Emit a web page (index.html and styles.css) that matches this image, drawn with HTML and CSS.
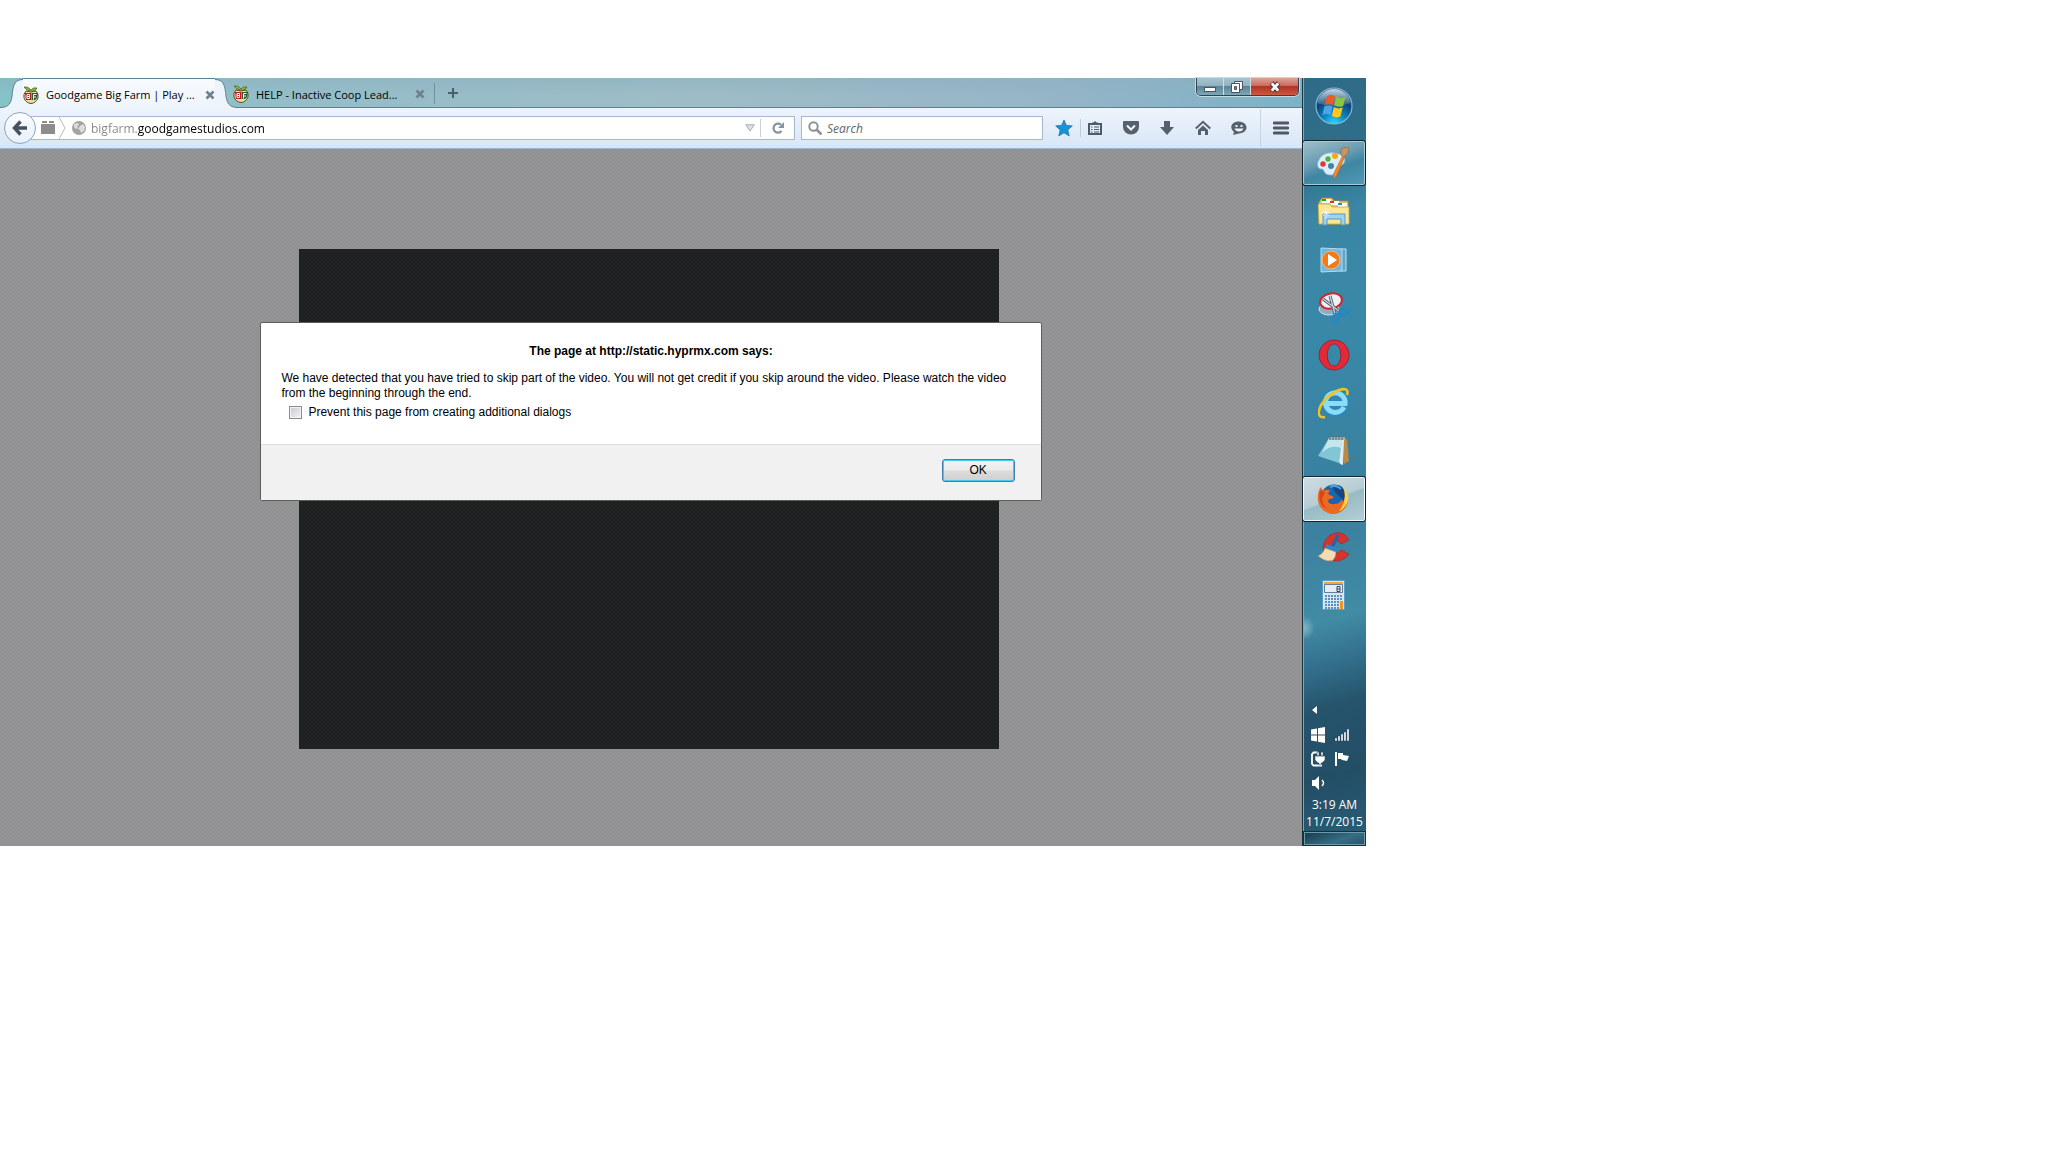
FILE: index.html
```html
<!DOCTYPE html>
<html lang="en">
<head>
	<meta charset="UTF-8">
	<title>Goodgame Big Farm | Play</title>
	<link rel="stylesheet" href="styles.css">
</head>
<body>
<svg class="defs" width="0" height="0">
	<symbol id="farm" viewBox="0 0 16 18">
		<path d="M3 5Q8 7 13 5q3 3 2 7-2 5-7 5.500Q3 17 1 12 0 8 3 5z" fill="#e9e0ae" stroke="#5d4a1c"/>
		<path d="M1 1Q5 0 8 4Q10 1 14 2Q13 5 9 5.500Q3 5 1 1Z" fill="#8fb43a" stroke="#46601c" stroke-width=".7"/>
		<path d="M2 7h6v7H3z" fill="#c4161c"/>
		<path d="M8.500 7H15l-1 5-2 2H8.500z" fill="#28582b"/>
		<path d="M4 8.500h2.500v2H4zM4 10.500h2.500v2H4zM10.500 13.500v-5h3M10.500 11H13" fill="none" stroke="#fff"/>
	</symbol>
	<symbol id="cross" viewBox="0 0 10 10">
		<path d="M1.500 1.500l7 7M8.500 1.500l-7 7" stroke="#6d818e" stroke-width="2.600"/>
	</symbol>
</svg>
<div class="desktop">
	<div class="window">
		<div class="titlebar">
			<div class="tab active">
				<svg class="curve" viewBox="0 0 22 30"><path d="M0 30V29.500C8 29 10 25 11 18C12 8 13 1.500 22 1.500V30Z" fill="#eef4fb"/><path d="M0 29.500C8 29 10 25 11 18C12 8 13 1.500 22 1.500" fill="none" stroke="#5d8291"/></svg>
				<div class="tab_body">
					<svg class="favicon"><use href="#farm"/></svg>
					<span class="tab_title">Goodgame Big Farm | Play ...</span>
					<button class="tab_close" aria-label="Close tab"><svg width="10" height="10"><use href="#cross"/></svg></button>
				</div>
				<svg class="curve" viewBox="0 0 22 30"><path d="M22 30V29.500C14 29 12 25 11 18C10 8 9 1.500 0 1.500V30Z" fill="#eef4fb"/><path d="M22 29.500C14 29 12 25 11 18C10 8 9 1.500 0 1.500" fill="none" stroke="#5d8291"/></svg>
			</div>
			<div class="tab inactive">
				<div class="tab_body">
					<svg class="favicon"><use href="#farm"/></svg>
					<span class="tab_title">HELP - Inactive Coop Lead...</span>
					<button class="tab_close" aria-label="Close tab"><svg width="10" height="10"><use href="#cross"/></svg></button>
				</div>
			</div>
			<button class="new_tab" aria-label="New tab"><svg width="10" height="10" viewBox="0 0 10 10"><path d="M5 0v10M0 5h10" stroke="#49606e" stroke-width="2"/></svg></button>
			<div class="controls">
				<button class="control" aria-label="Minimize"><svg width="14" height="14" viewBox="0 0 14 14"><rect x="1.500" y="7.500" width="11" height="4" fill="#fff" stroke="#485563"/></svg></button>
				<button class="control" aria-label="Restore"><svg width="14" height="14" viewBox="0 0 14 14"><path d="M4.500 1.500h8v8h-8z" fill="#fff" stroke="#485563"/><path d="M1.500 3.500h8v9h-8z" fill="#fff" stroke="#485563"/><path d="M4.500 6.500h2v3h-2z" fill="#7797a8" stroke="#485563"/></svg></button>
				<button class="control close" aria-label="Close"><svg width="14" height="14" viewBox="0 0 14 14"><path d="M3.500 3l7 8M10.500 3l-7 8" stroke="#5c3a40" stroke-width="5"/><path d="M3.800 3.300l6.400 7.400M10.200 3.300l-6.400 7.400" stroke="#fff" stroke-width="2.800"/></svg></button>
			</div>
		</div>

		<div class="toolbar">
			<button class="back" aria-label="Back"><svg width="16" height="16" viewBox="0 0 16 16"><path d="M8.500 1.500L2.500 8l6 6.500M3 8h12" fill="none" stroke="#47525f" stroke-width="3.400"/></svg></button>
			<div class="urlbar">
				<svg width="14" height="14" viewBox="0 0 14 14"><path d="M0 3h14v10H0zM1 0h5v2H1zM8 0h5v2H8z" fill="#8d8d8d"/></svg>
				<svg class="chevron" width="8" height="22" viewBox="0 0 8 22"><path d="M1 0l6 11-6 11" fill="none" stroke="#b9bec4"/></svg>
				<svg width="14" height="14" viewBox="0 0 14 14"><circle cx="7" cy="7" r="7" fill="#a3a3a3"/><path d="M2 3l4-1 1 2-2 1 1 2-2 1-2-2zM8 5l3-2 2 3-1 4-3 2-1-3-2-1z" fill="#dedede"/></svg>
				<input class="url" type="text" aria-label="Address" value="bigfarm.goodgamestudios.com">
				<button class="drop" aria-label="Show history"><svg width="10" height="8" viewBox="0 0 10 8"><path d="M.7.8h8.600L5 7z" fill="#dbe3ea" stroke="#a2adb7"/></svg></button>
				<button class="reload" aria-label="Reload"><svg width="12" height="12" viewBox="0 0 12 12"><path d="M9.500 9A4.500 4.500 0 1 1 9 2.800" fill="none" stroke="#8594a2" stroke-width="2.200"/><path d="M12 0v6H6z" fill="#8594a2"/></svg></button>
			</div>
			<div class="search">
				<svg width="14" height="14" viewBox="0 0 14 14"><circle cx="5.500" cy="5.500" r="4.200" fill="none" stroke="#8d9194" stroke-width="2"/><path d="M8.500 8.500l5 5" stroke="#8d9194" stroke-width="2.600"/></svg>
				<input type="text" aria-label="Search" placeholder="Search">
			</div>
			<div class="tools">
				<button class="tool star" aria-label="Bookmark"><svg width="18" height="18" viewBox="0 0 18 18"><path d="M9 1l2.300 5.300 6 .6-4.500 4 1.400 6L9 13.700l-5.200 3.200 1.400-6-4.500-4 6-.6z" fill="#1a93d4" stroke="#1a76ac" stroke-width=".8"/></svg></button>
				<button class="tool list" aria-label="Bookmarks list"><svg width="16" height="16" viewBox="0 0 16 16"><path d="M2 4h12v10H2z" fill="none" stroke="#4e5a68" stroke-width="2"/><path d="M5 4V2.500h1.500L8 1l1.500 1.500H11V4z" fill="#4e5a68"/><path d="M4 7h1.500M7 7h5M4 9.500h1.500M7 9.500h5M4 12h1.500M7 12h5" fill="none" stroke="#4e5a68" stroke-width="1.200"/></svg></button>
				<button class="tool" aria-label="Pocket"><svg width="16" height="16" viewBox="0 0 16 16"><path d="M1 1h14q1 0 1 1v5a8 7.500 0 0 1-16 0V2q0-1 1-1z" fill="#56616f"/><path d="M4 5.500l4 4 4-4" fill="none" stroke="#f2f6fb" stroke-width="2"/></svg></button>
				<button class="tool" aria-label="Downloads"><svg width="16" height="16" viewBox="0 0 16 16"><path d="M5 1h6v6h4l-7 8-7-8h4z" fill="#56616f"/></svg></button>
				<button class="tool" aria-label="Home"><svg width="16" height="16" viewBox="0 0 16 16"><path d="M.8 8.500L8 1.800l7.200 6.700" fill="none" stroke="#56616f" stroke-width="2"/><path d="M3 10l5-4.500 5 4.500v5h-3v-4H6v4H3z" fill="#56616f"/></svg></button>
				<button class="tool" aria-label="Chat"><svg width="16" height="16" viewBox="0 0 16 16"><path d="M8 1.500C18 2 18 13 8 13.500L2 15l1-3C-2 8 0 1.500 8 1.500z" fill="#56616f"/><path d="M3.500 8.500h9q-1 3-4.500 3t-4.500-3zM4.500 5h2v2h-2zM9.500 5h2v2h-2z" fill="#edf3fa"/></svg></button>
				<button class="tool menu" aria-label="Menu"><svg width="16" height="14" viewBox="0 0 16 14"><path d="M1 2h14M1 7h14M1 12h14" stroke="#4e5966" stroke-width="2.800" stroke-linecap="round"/></svg></button>
			</div>
		</div>

		<div class="page">
			<div class="video"></div>
			<div class="dialog" role="dialog" aria-labelledby="dialog_title">
				<div class="dialog_body">
					<h1 id="dialog_title">The page at http://static.hyprmx.com says:</h1>
					<p>We have detected that you have tried to skip part of the video. You will not get credit if you skip around the video. Please watch the video from the beginning through the end.</p>
					<div class="prevent">
						<input type="checkbox" id="prevent">
						<label for="prevent">Prevent this page from creating additional dialogs</label>
					</div>
				</div>
				<div class="dialog_foot"><button class="ok">OK</button></div>
			</div>
		</div>
	</div>

	<div class="taskbar">
		<button class="start" aria-label="Start">
			<svg width="40" height="40" viewBox="0 0 40 40">
				<defs>
					<radialGradient id="orb" cx=".5" cy="1" r=".95"><stop offset="0" stop-color="#29e0ff"/><stop offset=".35" stop-color="#0a86c4"/><stop offset=".7" stop-color="#0d4478"/><stop offset="1" stop-color="#486f92"/></radialGradient>
					<linearGradient id="shine" x2="0" y2="1"><stop offset="0" stop-color="#e6f0f7" stop-opacity=".8"/><stop offset="1" stop-color="#9fc1da" stop-opacity=".2"/></linearGradient>
				</defs>
				<circle cx="20" cy="20" r="18" fill="url(#orb)" stroke="#7fb6cf" stroke-width="1.200"/>
				<path d="M3.500 17a16.700 16.700 0 0 1 33 0Q20 23 3.500 17z" fill="url(#shine)"/>
				<path d="M13 10.500q4-2.500 8-.5l-2 9q-4-2-8.500.2z" fill="#ec5c1d"/>
				<path d="M22 10.500q5 3 9.500.5l-2.300 9q-4 2-9-.8z" fill="#8cc63c"/>
				<path d="M10.200 20.500q4-2 8.300 0l-2 8.500q-4-2-8 .2z" fill="#4ba6e8"/>
				<path d="M19.700 21q4.500 2.500 9 .6l-2.300 9q-4 2-8.600-.8z" fill="#fdc624"/>
			</svg>
		</button>
		<button class="task open" aria-label="Paint">
			<svg width="32" height="32" viewBox="0 0 32 32"><path d="M3 11C7 5 19 4 26 9q4 5-1 9-4 1-4 5 0 5-7 5-6 0-7-4-1-3-4-2-5-3 0-11z" fill="#dceefa" stroke="#93bdd8" stroke-width=".8"/><circle cx="14" cy="19" r="3" fill="#3e86a5"/><circle cx="6" cy="17" r="2.700" fill="#dd3a34"/><circle cx="11" cy="12" r="2.700" fill="#4bb634"/><circle cx="18" cy="9" r="3" fill="#f6a813"/><path d="M26 8l2 1-8 19q-3 4-4 3 0-4 2-7z" fill="#ee8a2c" stroke="#b85f1d" stroke-width=".6"/><path d="M24 2q4-3 8-1l-1 5-4 4-3-2z" fill="#c59665" stroke="#8b6238" stroke-width=".6"/></svg>
		</button>
		<button class="task" aria-label="Explorer">
			<svg width="32" height="32" viewBox="0 0 32 32"><path d="M1 7l3-4h10l2 3h14l1 23H1z" fill="#e6c661" stroke="#b18b2c" stroke-width=".8"/><path d="M4 4h9v4H4zM12 6h9v4h-9zM20 8h9v4h-9z" fill="#fff"/><path d="M4 4h4v2H4z" fill="#1ba33c"/><path d="M12 6h4v2h-4z" fill="#d93a24"/><path d="M20 8h4v2h-4z" fill="#2484d8"/><path d="M0 9h12l2 3h17v17H1z" fill="#fae694" stroke="#c8a444" stroke-width=".8"/><path d="M5 19h22v11h-4v-6H9v6H5z" fill="#9bd3f1" stroke="#5599c3"/><path d="M8 13v11M3 18h10M5 15l6 6M11 15l-6 6" stroke="#fff" stroke-width=".7"/></svg>
		</button>
		<button class="task" aria-label="Media Player">
			<svg width="32" height="32" viewBox="0 0 32 32"><path d="M22 6h6v22h-6z" fill="#5ca5cb" stroke="#c0e2f1"/><path d="M3 5l21 1v22l-21 1z" fill="#73b7dc" stroke="#b4dcf0"/><circle cx="13" cy="17" r="9" fill="#f47a18" stroke="#ffc280" stroke-width=".8"/><path d="M10 11l9 6-9 6z" fill="#fff"/></svg>
		</button>
		<button class="task" aria-label="Snipping Tool">
			<svg width="32" height="32" viewBox="0 0 32 32"><ellipse cx="11" cy="18" rx="10" ry="6" fill="#88afc3" stroke="#d4e4ec"/><ellipse cx="13" cy="10" rx="11" ry="7.500" transform="rotate(-12 13 10)" fill="#edf0f7" stroke="#d3232d" stroke-width="2"/><path d="M5 8l16 12M12 5l5 18" stroke="#4b5c68" stroke-width="3"/><path d="M5 8l16 12M12 5l5 18" stroke="#c5d0d6" stroke-width="1.400"/><ellipse cx="26" cy="21" rx="5" ry="2.700" transform="rotate(-15 26 21)" fill="none" stroke="#2088cc" stroke-width="2"/><ellipse cx="18" cy="27" rx="2.600" ry="4.500" transform="rotate(12 18 27)" fill="none" stroke="#2088cc" stroke-width="2"/></svg>
		</button>
		<button class="task" aria-label="Opera">
			<svg width="32" height="32" viewBox="0 0 32 32"><path fill-rule="evenodd" d="M16 1a15 15 0 1 0 .1 0zM16 5c9 0 9 22 0 22S7 5 16 5z" fill="#e32836" stroke="#8c2035" stroke-width=".8"/></svg>
		</button>
		<button class="task" aria-label="Internet Explorer">
			<svg width="32" height="32" viewBox="0 0 32 32"><path d="M26.500 20.500A10 10 0 1 1 27.500 16.500H10" fill="none" stroke="#2689c4" stroke-width="6.500"/><path d="M26 20A9.800 9.800 0 1 1 27 16.500H10" fill="none" stroke="#8bdcf9" stroke-width="5"/><path d="M7 30C-4 32 1 17 11 9S32-1 29 8" fill="none" stroke="#f2c31c" stroke-width="2.600"/></svg>
		</button>
		<button class="task" aria-label="Notepad">
			<svg width="32" height="32" viewBox="0 0 32 32"><path d="M25 4h4l2 22-5 3z" fill="#b88a43"/><path d="M11 3l15 2-1 25-3-1z" fill="#dfeaec"/><path d="M11 3l13 2-3 23-21-7z" fill="#80c6d5"/><path d="M11 3l13 2-1 8Q12 9 4 18z" fill="#c3e7ed"/><path d="M11 2h16v3H11z" fill="#a9b1b2"/><path d="M12 1v4M15 1v4M18 1v4M21 1v4M24 1v4" stroke="#596a70"/></svg>
		</button>
		<button class="task open current" aria-label="Firefox">
			<svg width="32" height="32" viewBox="0 0 32 32"><circle cx="17" cy="15" r="13.500" fill="#1b65ae"/><path d="M15 3q8-3 12 4 4 5 2 13l-6 4 2-8-7-7z" fill="#174780"/><path d="M13 4q6-3 11 2" stroke="#4f9fdd" fill="none" stroke-width="2"/><path d="M28 8q6 8 1 16-6 8-15 7Q3 28 1 18 0 9 4 4l2 4q3-2 7-1l-2 4 6 3q-1 2-4 2-2 0-2 3 3 3 6 2 6 0 8-5l1 3 2-5q1-3 0-6z" fill="#eb6a20"/><path d="M26 4q9 10 3 18-3 5-7 6 9-11 4-24z" fill="#fbd348"/><path d="M4 7l4 3-3 5q0 7 6 11-11-4-8-18z" fill="#d8451d"/></svg>
		</button>
		<button class="task" aria-label="CCleaner">
			<svg width="32" height="32" viewBox="0 0 32 32"><path d="M31 9l-8 4q-2-4-6-3-4 2-4 7 1 5 5 5 3 0 5-3l8 4q-5 7-13 7-12-1-13-13Q6 5 17 2q9-2 14 7z" fill="#d5332d" stroke="#9e2522" stroke-width=".6"/><path d="M20 4L14 17" stroke="#1d67ae" stroke-width="3"/><path d="M9 13l10 4-1 4-11-4z" fill="#2c86cd"/><path d="M7 17l11 4q0 6-4 9-2-1-3 0-5 0-11-5 5-2 7-8z" fill="#f3dcb6" stroke="#ae8d63" stroke-width=".6"/></svg>
		</button>
		<button class="task" aria-label="Calculator">
			<svg width="32" height="32" viewBox="0 0 32 32"><rect x="4.500" y="1.500" width="22" height="29" rx="1" fill="#d3e8f8" stroke="#5a9aca"/><path d="M6 3h19v2H6z" fill="#f3a73a"/><path d="M6.500 5.500h18v8h-18z" fill="#e5edf2" stroke="#637f97"/><path d="M19 7.500h3v5h-3zM19 10h3" fill="none" stroke="#34495e"/><path d="M7 17h18M7 20h18M7 23h14M7 26h14M7 29h14" stroke="#5f8fba" stroke-width="2" stroke-dasharray="2 1"/><path d="M22 22h3v8h-3z" fill="#f2951e"/></svg>
		</button>

		<div class="tray">
			<svg class="more" width="16" height="16" viewBox="0 0 16 16"><path d="M7 3v8L2 7z" fill="#fff"/></svg>
			<svg width="16" height="16" viewBox="0 0 16 16"><path d="M1 2.500l6-1v6H1zM8 1.300L15 0v7.500H8zM1 8.500h6v6l-6-1zM8 8.500h7V16l-7-1.300z" fill="#fff"/></svg>
			<svg width="16" height="16" viewBox="0 0 16 16"><path d="M1 11h2v3H1zM4 9h2v5H4zM7 7h2v7H7zM10 5h2v9h-2zM13 2h2v12h-2z" fill="#fff" stroke="#1b3b4c" stroke-width=".4"/></svg>
			<svg width="16" height="16" viewBox="0 0 16 16"><path d="M12 14.500H3.500L2 13V3l1.500-1.500H8" fill="none" stroke="#fff" stroke-width="1.800"/><path d="M5 5h10v4l-3 3h-1v2H9v-2H8L5 9zM7 1h2v4H7zM11 1h2v4h-2z" fill="#fff" stroke="#1b3b4c" stroke-width=".5"/></svg>
			<svg width="16" height="16" viewBox="0 0 16 16"><path d="M1 1h2v14H1z" fill="#fff"/><path d="M4 2h5v2l6 1-2 5-5-1-1-1H4z" fill="#fff"/></svg>
			<svg width="16" height="16" viewBox="0 0 16 16"><path d="M2 5h3l4-4v14l-4-4H2z" fill="#fff"/><path d="M12 5q3 3 0 6" fill="none" stroke="#fff" stroke-width="1.500"/></svg>
		</div>
		<div class="clock"><span>3:19 AM</span><span>11/7/2015</span></div>
		<button class="show_desktop" aria-label="Show desktop"></button>
	</div>
</div>
</body>
</html>
```
FILE: styles.css
```css
*{
	box-sizing: border-box;
}
body{
	margin: 0;
	padding-top: 78px;
	background: #fff;
	font-family: "Open Sans", "Noto Sans", sans-serif;
	font-size: 12px;
	color: #000;
}
button{
	padding: 0;
	border: 0;
	background: none;
	font: inherit;
	display: flex;
	align-items: center;
	justify-content: center;
}
input{
	border: 0;
	padding: 0;
	font: inherit;
	outline: 0;
}
svg{
	display: block;
	flex: none;
}
.defs{
	position: absolute;
}
.desktop{
	display: flex;
	width: 66.667%;
	height: 66.667vh;
	min-height: 768px;
}
.window{
	flex: 1;
	min-width: 0;
	display: flex;
	flex-direction: column;
}

/* tabs */
.titlebar{
	display: flex;
	height: 30px;
	padding-left: 1px;
	background: linear-gradient(180deg, #8cafc088, transparent 60%), linear-gradient(90deg, #84c3c6, #93bec8 20%, #9ebcc6 55%, #96b5c7 80%, #7db2c5);
	box-shadow: inset 0 -1px #5d7f8f;
}
.tab{
	display: flex;
}
.curve{
	width: 22px;
	height: 30px;
}
.tab_body{
	display: flex;
	align-items: center;
	width: 192px;
	padding-top: 2px;
}
.active .tab_body{
	background: linear-gradient(#f8fbfe, #eef4fb);
	border-top: 1px solid #5d8291;
}
.inactive{
	margin-left: -4px;
	padding-right: 9px;
}
.favicon{
	width: 16px;
	height: 18px;
	margin-right: 7px;
}
.tab_title{
	flex: 1;
	min-width: 0;
	font-size: 11px;
	white-space: nowrap;
}
.new_tab{
	width: 38px;
	position: relative;
}
.new_tab::before{
	content: "";
	position: absolute;
	left: 0;
	top: 5px;
	height: 21px;
	border-left: 1px solid #7291a0;
}
.controls{
	display: flex;
	height: 18px;
	margin: 0 3px 0 auto;
	border: 1px solid #34424e;
	border-top: 0;
	border-radius: 0 0 5px 5px;
	overflow: hidden;
	box-shadow: 0 0 0 1px #c1dbe4;
}
.control{
	width: 27px;
	border-right: 1px solid #cadce4;
	background: linear-gradient(#a8c4d0, #92b1bf 45%, #5b8496 50%, #7ca8b8);
}
.control.close{
	width: 47px;
	border-right: 0;
	background: linear-gradient(#dca298, #cb6b5d 45%, #b23322 50%, #cb5a41);
}

/* toolbar */
.toolbar{
	display: flex;
	align-items: center;
	height: 41px;
	padding: 0 1px 0 4px;
	background: linear-gradient(#eef4fb, #d9e6f6);
	border-bottom: 1px solid #9fb6cf;
}
.back{
	width: 32px;
	height: 32px;
	border: 1px solid #8ea6bb;
	border-radius: 50%;
	background: linear-gradient(#fbfdff, #e7f0fa);
	z-index: 1;
}
.urlbar, .search{
	display: flex;
	align-items: center;
	height: 24px;
	border: 1px solid #a6b8cb;
	background: #fff;
}
.urlbar{
	flex: 1;
	margin: 0 6px 0 -5px;
	padding-left: 9px;
}
.chevron{
	margin: 0 6px 0 3px;
}
.url{
	flex: 1;
	min-width: 0;
	margin-left: 5px;
	color: transparent;
	/* subdomain is dimmed, the domain itself stays black */
	background: linear-gradient(90deg, #858585 46px, #000 46px);
	-webkit-background-clip: text;
	background-clip: text;
}
.drop{
	width: 22px;
	height: 18px;
	border-right: 1px solid #ccd0d4;
}
.reload{
	width: 33px;
}
.search{
	width: 242px;
	padding-left: 6px;
	gap: 5px;
}
.search input{
	flex: 1;
	min-width: 0;
	font-style: italic;
}
.search input::placeholder{
	color: #666;
}
.tools{
	display: flex;
	align-items: center;
	margin-left: 4px;
}
.tool{
	width: 36px;
	height: 18px;
}
.tool.star{
	width: 34px;
	border-right: 1px solid #c0ccd9;
}
.tool.list{
	width: 28px;
	margin-right: 4px;
}
.tool.menu{
	width: 41px;
	height: 38px;
	margin-left: 3px;
	border-left: 1px solid #c6d3e2;
}

/* page under the alert */
.page{
	flex: 1;
	position: relative;
	display: flex;
	align-items: center;
	justify-content: center;
	padding: 2px 4px 0 0;
	background: repeating-conic-gradient(#8f9193 0 25%, #959595 0 50%) 0 0 / 4px 4px;
}
.video{
	width: 700px;
	height: 500px;
	background: repeating-conic-gradient(#1c1f20 0 25%, #232525 0 50%) 0 0 / 4px 4px;
}
.dialog{
	position: absolute;
	top: 173px;
	left: 20%;
	right: 20%;
	border: 1px solid #5c5c5c;
	border-radius: 2px;
	background: #fff;
	font: 12px/15px "Liberation Sans", Arial, sans-serif;
}
.dialog_body{
	padding: 21px 20px;
	height: 121px;
}
.dialog h1{
	margin: 0 0 12px;
	font-size: 12px;
	line-height: 15px;
	text-align: center;
}
.dialog p{
	margin: 0;
}
.prevent{
	display: flex;
	align-items: center;
	gap: 6px;
	margin: 4px 0 0 8px;
}
.prevent input{
	appearance: none;
	width: 13px;
	height: 13px;
	margin: 0;
	border: 1px solid #8b8b8b;
	background: linear-gradient(135deg, #c4c9d2, #f4f4f5);
	box-shadow: inset 0 0 0 1px #f3f3f3;
}
.dialog_foot{
	display: flex;
	justify-content: flex-end;
	height: 56px;
	padding: 14px 26px;
	border-top: 1px solid #dfdfdf;
	background: #f1f1f1;
}
.ok{
	width: 73px;
	height: 23px;
	border: 1px solid #3c7fb1;
	border-radius: 3px;
	background: linear-gradient(#f2f2f2, #ebebeb 48%, #dcdcdc 52%, #cfcfcf);
	box-shadow: inset 0 0 0 1px #45c8f2;
}

/* taskbar */
.taskbar{
	width: 64px;
	display: flex;
	flex-direction: column;
	border-left: 1px solid #1c3340;
	background: radial-gradient(circle at 0 550px, #86bccb 0, #86bccb00 12px), linear-gradient(165deg, #2f6b87 0, #2f6d88 11%, #3a86a4 18%, #3988a8 35%, #397f9f 55%, #418ba4 70%, #34728f 75%, #25546c 81%, #234e66 90%, #2b5f77);
	box-shadow: inset 1px 0 #7fa9b9;
}
.start{
	height: 56px;
	margin-bottom: 6px;
	padding-right: 2px;
}
.task{
	height: 46px;
	margin-bottom: 2px;
	padding-right: 2px;
}
.task.open{
	margin-left: -1px;
	border: 1px solid #102631;
	border-radius: 3px;
	background: linear-gradient(160deg, #9fbfcb, #6a9db1 40%, #3f86a3 60%, #5299b4);
	box-shadow: inset 0 0 0 1px #a8cad8;
}
.task.current{
	background: linear-gradient(160deg, #cfdde1, #b6cdd4 48%, #97bbc6 52%, #b4ced6);
	box-shadow: inset 0 0 0 1px #f1f7f9;
}
.tray{
	display: grid;
	grid-template-columns: 16px 16px;
	gap: 8px;
	margin: auto 0 5px 7px;
}
.more{
	grid-column: span 2;
}
.clock{
	display: flex;
	flex-direction: column;
	align-items: center;
	line-height: 17px;
	padding-bottom: 1px;
	color: #fff;
}
.show_desktop{
	height: 15px;
	border: 1px solid #162f3c;
	background: linear-gradient(160deg, #17394a, #356e86 60%, #255268);
	box-shadow: inset 0 0 0 1px #6f99ab;
}
```
